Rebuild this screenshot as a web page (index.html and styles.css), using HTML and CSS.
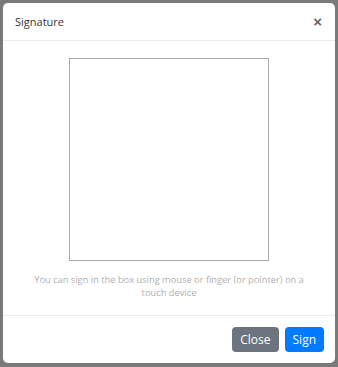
FILE: index.html
```html
<!DOCTYPE html>
<html lang="en">
<head>
    <meta charset="UTF-8">
    <meta name="viewport" content="width=device-width, initial-scale=1.0">
    <title>Signature</title>
    <link rel="stylesheet" href="styles.css">
</head>
<body>
    <div class="modal">
        <div class="modal-header">
            <h5>Signature</h5>
            <button class="close" aria-label="Close">&times;</button>
        </div>

        <div class="modal-body">
            <canvas class="pad" width="198" height="201"></canvas>
            <p class="hint">You can sign in the box using mouse or finger (or pointer) on a touch device</p>
        </div>

        <div class="modal-footer">
            <button class="btn btn-secondary">Close</button>
            <button class="btn btn-primary">Sign</button>
        </div>
    </div>
</body>
</html>
```

FILE: styles.css
```css
/* Geral */
body {
    font-family: "Open Sans", Arial, sans-serif;
    background: #7a7a7a;
    margin: 0;
    padding: 3px;
}

.modal {
    background: white;
    width: 332px;
    height: 360px;
    border-radius: 5px;
    display: flex;
    flex-direction: column;
    box-sizing: border-box;
}

.modal-header {
    display: flex;
    justify-content: space-between;
    align-items: center;
    height: 37px;
    padding: 0 13px 0 12px;
    border-bottom: 1px solid #e9ecef;
}

.modal-header h5 {
    margin: 0;
    font-size: 11px;
    font-weight: 400;
    color: #333;
}

.close {
    background: none;
    border: none;
    padding: 0;
    font-size: 15px;
    font-weight: 700;
    color: #666;
    line-height: 1;
    cursor: pointer;
}

.modal-body {
    flex: 1;
    display: flex;
    flex-direction: column;
    align-items: center;
    padding-top: 17px;
}

.pad {
    width: 198px;
    height: 201px;
    border: 1px solid #aaa;
}

.hint {
    margin: 12px 20px 0;
    font-size: 9.3px;
    line-height: 13px;
    color: #b0b0b0;
    text-align: center;
}

.modal-footer {
    display: flex;
    justify-content: flex-end;
    gap: 6px;
    padding: 11px;
    border-top: 1px solid #e9ecef;
}

.btn {
    height: 25px;
    padding: 0 8px;
    border: none;
    border-radius: 4px;
    font-family: inherit;
    font-size: 12px;
    color: white;
    cursor: pointer;
}

.btn-secondary {
    background: #6c757d;
}

.btn-primary {
    background: #007bff;
}
```
